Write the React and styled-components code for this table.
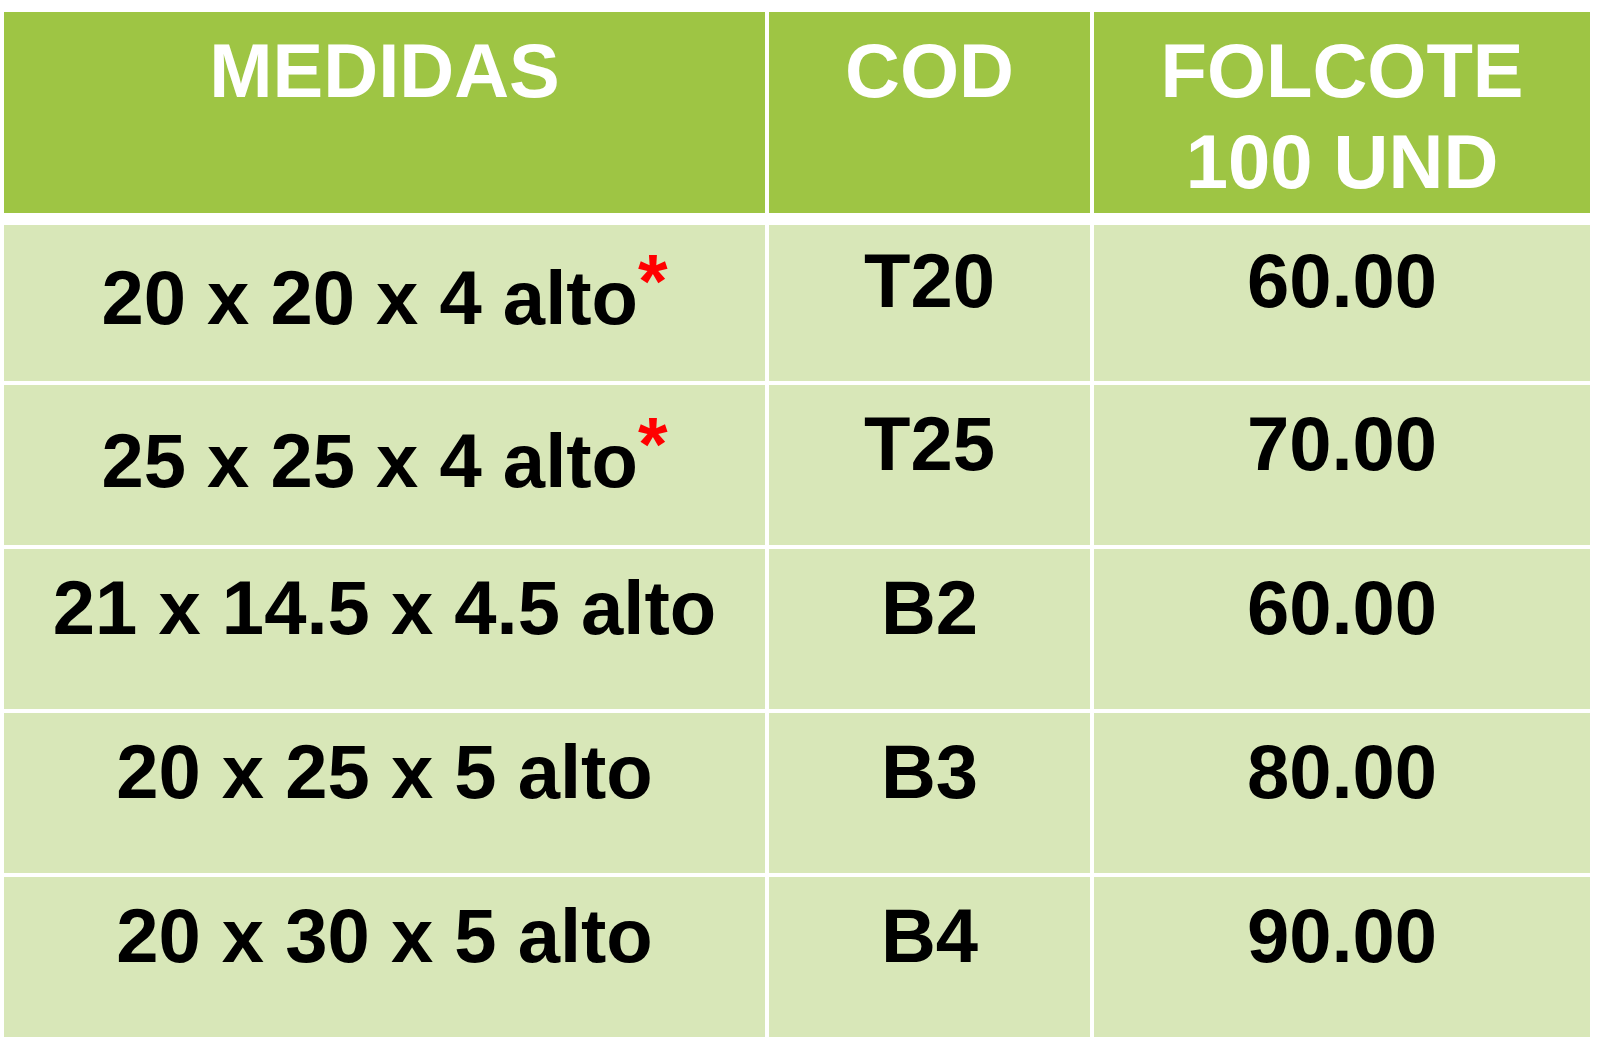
import styled, { createGlobalStyle } from "styled-components";

const rows = [
  { medida: "20 x 20 x 4 alto", star: true, cod: "T20", precio: "60.00" },
  { medida: "25 x 25 x 4 alto", star: true, cod: "T25", precio: "70.00" },
  { medida: "21 x 14.5 x 4.5 alto", cod: "B2", precio: "60.00" },
  { medida: "20 x 25 x 5 alto", cod: "B3", precio: "80.00" },
  { medida: "20 x 30 x 5 alto", cod: "B4", precio: "90.00" },
];

export default function App() {
  return (
    <>
      <GlobalStyle />
      <Page>
        <Table>
          <HeaderRow>
            <HeadCell>MEDIDAS</HeadCell>
            <HeadCell>COD</HeadCell>
            <HeadCell>
              FOLCOTE
              <br />
              100 UND
            </HeadCell>
          </HeaderRow>
          {rows.map((row, idx) => (
            <BodyRow key={idx} $first={idx === 0}>
              <Cell $first={idx === 0}>
                {row.medida}
                {row.star && <Star>*</Star>}
              </Cell>
              <Cell $first={idx === 0}>{row.cod}</Cell>
              <Cell $first={idx === 0}>{row.precio}</Cell>
            </BodyRow>
          ))}
        </Table>
      </Page>
    </>
  );
}

const GlobalStyle = createGlobalStyle`
  html, body {
    margin: 0;
    padding: 0;
    background: #ffffff;
  }
  body {
    font-family: "Liberation Sans", Arial, sans-serif;
  }
`;

const Page = styled.div`
  width: 1600px;
  height: 1043px;
  background: #ffffff;
  padding: 12px 10px 0 4px;
  box-sizing: border-box;
  overflow: hidden;
`;

const Table = styled.div`
  display: flex;
  flex-direction: column;
  gap: 4px;
  width: 1586px;
`;

const HeaderRow = styled.div`
  display: grid;
  grid-template-columns: 761px 321px 496px;
  gap: 4px;
  height: 201px;
  margin-bottom: 8px;
`;

const HeadCell = styled.div`
  background: #9ec544;
  color: #ffffff;
  font-weight: 700;
  font-size: 76px;
  line-height: 91px;
  text-align: center;
  padding-top: 13px;
  box-sizing: border-box;
`;

const BodyRow = styled.div`
  display: grid;
  grid-template-columns: 761px 321px 496px;
  gap: 4px;
  height: ${(p) => (p.$first ? "156px" : "160px")};
`;

const Cell = styled.div`
  background: #d8e7b8;
  color: #000000;
  font-weight: 700;
  font-size: 76px;
  line-height: 91px;
  text-align: center;
  white-space: nowrap;
  padding-top: ${(p) => (p.$first ? "10px" : "13px")};
  box-sizing: border-box;
`;

const Star = styled.span`
  color: #ff0000;
  vertical-align: 17px;
`;
